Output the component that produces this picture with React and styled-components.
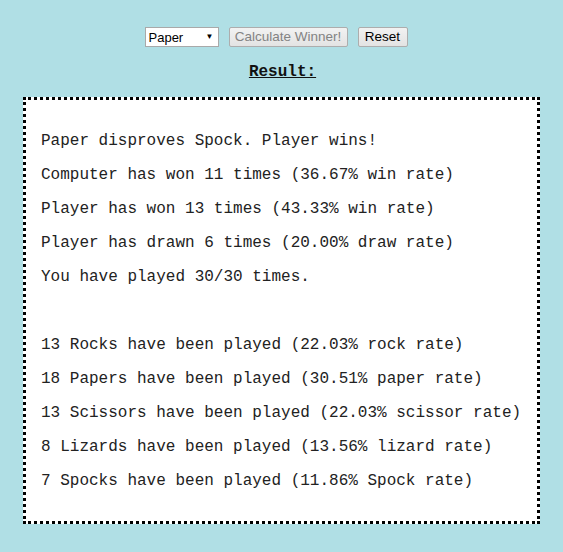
import React from 'react'
import styled, { createGlobalStyle } from 'styled-components'

const GlobalStyle = createGlobalStyle`
    html, body {
        background-color: #B0DFE5;
    }
    body {
        margin: 8px;
        font-family: "Liberation Sans", Arial, sans-serif;
    }
`

const Page = styled.div`
    display: flex;
    flex-direction: column;
    padding-top: 19px;
`

const Controls = styled.div`
    display: flex;
    justify-content: center;
    align-items: center;
    gap: 10px;
    padding-right: 11px;
    height: 20px;
`

const SelectWrap = styled.span`
    position: relative;
    display: inline-block;
    width: 74px;
    height: 20px;
`

const Select = styled.select`
    appearance: none;
    -webkit-appearance: none;
    box-sizing: border-box;
    width: 100%;
    height: 100%;
    margin: 0;
    padding: 0 0 0 3px;
    border: 1px solid #A9A9A9;
    border-radius: 0;
    background: #fff;
    color: #000;
    font-family: "Liberation Sans", Arial, sans-serif;
    font-size: 13px;
    outline: none;
`

const Arrow = styled.span`
    position: absolute;
    right: 5px;
    top: 6px;
    font-size: 8px;
    line-height: 8px;
    color: #000;
    pointer-events: none;
`

const Button = styled.button`
    box-sizing: border-box;
    height: 20px;
    margin: 0;
    padding: 0;
    border: 1px solid #ADADAD;
    border-radius: 2px;
    background: linear-gradient(#F2F2F2, #E3E3E3);
    color: ${p => (p.disabled ? '#838383' : '#000')};
    font-family: "Liberation Sans", Arial, sans-serif;
    font-size: 13.5px;
    line-height: 18px;
    white-space: nowrap;
    width: ${p => p.w}px;
`

const Heading = styled.h4`
    margin: 16px 0;
    text-align: center;
    font-family: "Liberation Mono", "Courier New", monospace;
    font-size: 16px;
    line-height: 18px;
    font-weight: bold;
    text-decoration: underline;
    color: #111;
    padding-left: 2px;
`

const ResultBox = styled.div`
    margin: 0 15px;
    padding: 16px 15px 15px;
    background-color: #fff;
    border: 3px dotted #000;
    font-family: "Liberation Mono", "Courier New", monospace;
    font-size: 16px;
    color: #222;

    p {
        margin: 16px 0;
        line-height: 18px;
        white-space: pre;
    }
`

const stats = [
    'Paper disproves Spock. Player wins!',
    'Computer has won 11 times (36.67% win rate)',
    'Player has won 13 times (43.33% win rate)',
    'Player has drawn 6 times (20.00% draw rate)',
    'You have played 30/30 times.',
    ' ',
    '13 Rocks have been played (22.03% rock rate)',
    '18 Papers have been played (30.51% paper rate)',
    '13 Scissors have been played (22.03% scissor rate)',
    '8 Lizards have been played (13.56% lizard rate)',
    '7 Spocks have been played (11.86% Spock rate)',
]

export default function App() {
    return (
        <Page>
            <GlobalStyle />
            <Controls>
                <SelectWrap>
                    <Select defaultValue="Paper">
                        <option>Rock</option>
                        <option>Paper</option>
                        <option>Scissors</option>
                        <option>Lizard</option>
                        <option>Spock</option>
                    </Select>
                    <Arrow>▼</Arrow>
                </SelectWrap>
                <Button disabled w={119}>Calculate Winner!</Button>
                <Button w={50}>Reset</Button>
            </Controls>
            <Heading>Result:</Heading>
            <ResultBox>
                {stats.map((s, i) => (
                    <p key={i}>{s}</p>
                ))}
            </ResultBox>
        </Page>
    )
}
